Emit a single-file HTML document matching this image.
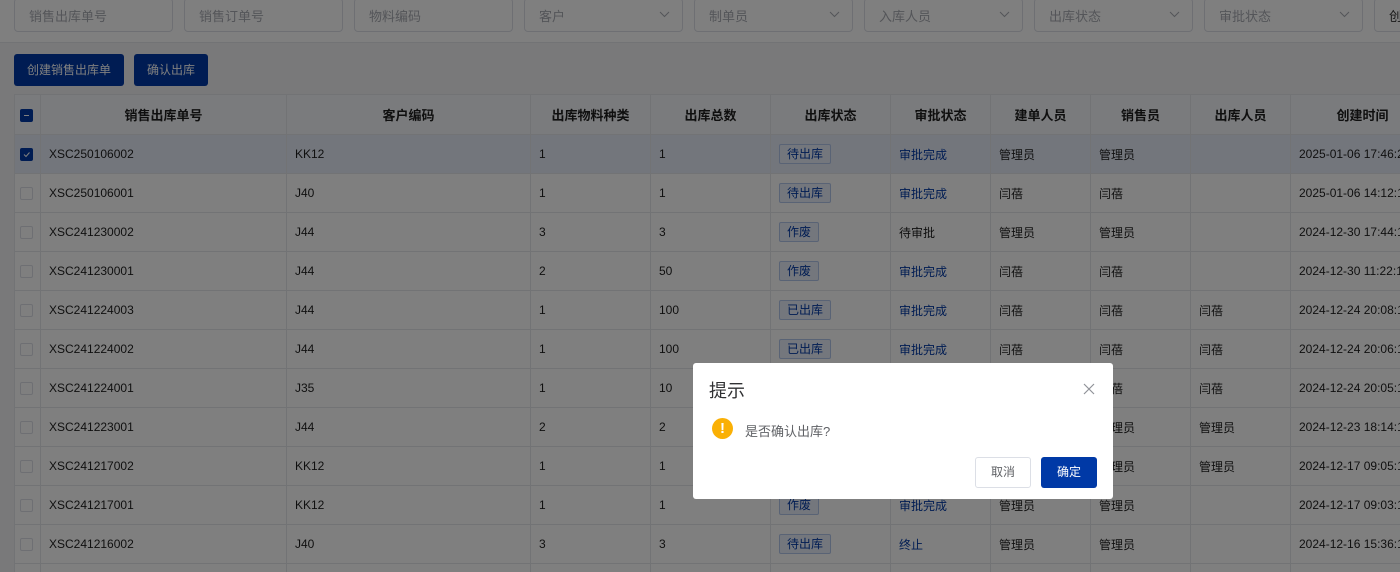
<!DOCTYPE html>
<html><head><meta charset="utf-8"><style>
*{box-sizing:border-box;margin:0;padding:0}
html,body{width:1400px;height:572px;overflow:hidden}
body{background:#f2f3f5;font-family:"Liberation Sans","Noto Sans CJK SC",sans-serif;font-size:12px;color:#1f1f1f;position:relative}
.top{position:absolute;left:0;top:0;width:1400px;height:43px;background:#fff;border-bottom:1px solid #e4e6ea}
.inp{position:absolute;top:-2px;height:34px;width:159px;border:1px solid #dcdfe6;border-radius:4px;background:#fff;color:#a8abb2;font-size:13px;padding:7px 14px}
.inp svg{position:absolute;right:12px;top:12px}
.btn{position:absolute;top:54px;height:32px;background:#0039a6;color:#fff;border-radius:3px;font-size:12px;line-height:32px;text-align:center}
table{position:absolute;left:14px;top:94px;border-collapse:collapse;table-layout:fixed;width:1420px;background:#fff}
td,th{border:1px solid #e4e6ea;height:39px;padding:0 8px;white-space:nowrap;overflow:hidden;text-align:left;font-weight:normal}
th{height:40px;background:#f5f7fa;text-align:center;font-weight:bold;font-size:13px}
tr.sel td{background:#e6ecf8}
.cb{display:inline-block;width:13px;height:13px;border:1px solid #dcdfe6;border-radius:2px;background:#fff;vertical-align:middle;position:relative}
.cb.on{background:#0039a6;border-color:#0039a6}
.tag{display:inline-block;border:1px solid #b3c6eb;background:#e8eefa;color:#0039a6;border-radius:2px;padding:0 7px;line-height:18px;font-size:12px}
.lk{color:#0039a6}
.ov{position:absolute;left:0;top:0;width:1400px;height:572px;background:rgba(0,0,0,.5)}
.dlg{position:absolute;left:693px;top:363px;width:420px;height:136px;background:#fff;border-radius:3px}
</style></head><body>
<div class="top">
<div class="inp" style="left:14px">销售出库单号</div>
<div class="inp" style="left:184px">销售订单号</div>
<div class="inp" style="left:354px">物料编码</div>
<div class="inp" style="left:524px">客户<svg width="11" height="7"><path d="M1 1l4.5 4.5L10 1" stroke="#a8abb2" fill="none"/></svg></div>
<div class="inp" style="left:694px">制单员<svg width="11" height="7"><path d="M1 1l4.5 4.5L10 1" stroke="#a8abb2" fill="none"/></svg></div>
<div class="inp" style="left:864px">入库人员<svg width="11" height="7"><path d="M1 1l4.5 4.5L10 1" stroke="#a8abb2" fill="none"/></svg></div>
<div class="inp" style="left:1034px">出库状态<svg width="11" height="7"><path d="M1 1l4.5 4.5L10 1" stroke="#a8abb2" fill="none"/></svg></div>
<div class="inp" style="left:1204px">审批状态<svg width="11" height="7"><path d="M1 1l4.5 4.5L10 1" stroke="#a8abb2" fill="none"/></svg></div>
<div class="inp" style="left:1374px;color:#333">创</div>
</div>
<div class="btn" style="left:14px;width:110px">创建销售出库单</div>
<div class="btn" style="left:134px;width:74px">确认出库</div>
<table>
<colgroup><col style="width:26px"><col style="width:246px"><col style="width:244px"><col style="width:120px"><col style="width:120px"><col style="width:120px"><col style="width:100px"><col style="width:100px"><col style="width:100px"><col style="width:100px"><col style="width:144px"></colgroup>
<tr><th style="padding:0 0 0 5px;text-align:left"><span class="cb on"><span style="position:absolute;left:3px;top:5px;width:5px;height:1px;background:#fff"></span></span></th><th>销售出库单号</th><th>客户编码</th><th>出库物料种类</th><th>出库总数</th><th>出库状态</th><th>审批状态</th><th>建单人员</th><th>销售员</th><th>出库人员</th><th>创建时间</th></tr>
<tr class="sel"><td style="padding:0 0 0 5px"><span class="cb on"><svg width="11" height="11" style="position:absolute;left:0;top:0"><path d="M3 5.5l2 2 3.5-4" stroke="#fff" fill="none"/></svg></span></td><td>XSC250106002</td><td>KK12</td><td>1</td><td>1</td><td><span class="tag">待出库</span></td><td class="lk">审批完成</td><td>管理员</td><td>管理员</td><td></td><td>2025-01-06 17:46:23</td></tr>
<tr><td style="padding:0 0 0 5px"><span class="cb"></span></td><td>XSC250106001</td><td>J40</td><td>1</td><td>1</td><td><span class="tag">待出库</span></td><td class="lk">审批完成</td><td>闫蓓</td><td>闫蓓</td><td></td><td>2025-01-06 14:12:11</td></tr>
<tr><td style="padding:0 0 0 5px"><span class="cb"></span></td><td>XSC241230002</td><td>J44</td><td>3</td><td>3</td><td><span class="tag">作废</span></td><td>待审批</td><td>管理员</td><td>管理员</td><td></td><td>2024-12-30 17:44:10</td></tr>
<tr><td style="padding:0 0 0 5px"><span class="cb"></span></td><td>XSC241230001</td><td>J44</td><td>2</td><td>50</td><td><span class="tag">作废</span></td><td class="lk">审批完成</td><td>闫蓓</td><td>闫蓓</td><td></td><td>2024-12-30 11:22:10</td></tr>
<tr><td style="padding:0 0 0 5px"><span class="cb"></span></td><td>XSC241224003</td><td>J44</td><td>1</td><td>100</td><td><span class="tag">已出库</span></td><td class="lk">审批完成</td><td>闫蓓</td><td>闫蓓</td><td>闫蓓</td><td>2024-12-24 20:08:10</td></tr>
<tr><td style="padding:0 0 0 5px"><span class="cb"></span></td><td>XSC241224002</td><td>J44</td><td>1</td><td>100</td><td><span class="tag">已出库</span></td><td class="lk">审批完成</td><td>闫蓓</td><td>闫蓓</td><td>闫蓓</td><td>2024-12-24 20:06:10</td></tr>
<tr><td style="padding:0 0 0 5px"><span class="cb"></span></td><td>XSC241224001</td><td>J35</td><td>1</td><td>10</td><td><span class="tag">已出库</span></td><td class="lk">审批完成</td><td>闫蓓</td><td>闫蓓</td><td>闫蓓</td><td>2024-12-24 20:05:10</td></tr>
<tr><td style="padding:0 0 0 5px"><span class="cb"></span></td><td>XSC241223001</td><td>J44</td><td>2</td><td>2</td><td><span class="tag">已出库</span></td><td class="lk">审批完成</td><td>管理员</td><td>管理员</td><td>管理员</td><td>2024-12-23 18:14:10</td></tr>
<tr><td style="padding:0 0 0 5px"><span class="cb"></span></td><td>XSC241217002</td><td>KK12</td><td>1</td><td>1</td><td><span class="tag">已出库</span></td><td class="lk">审批完成</td><td>管理员</td><td>管理员</td><td>管理员</td><td>2024-12-17 09:05:10</td></tr>
<tr><td style="padding:0 0 0 5px"><span class="cb"></span></td><td>XSC241217001</td><td>KK12</td><td>1</td><td>1</td><td><span class="tag">作废</span></td><td class="lk">审批完成</td><td>管理员</td><td>管理员</td><td></td><td>2024-12-17 09:03:10</td></tr>
<tr><td style="padding:0 0 0 5px"><span class="cb"></span></td><td>XSC241216002</td><td>J40</td><td>3</td><td>3</td><td><span class="tag">待出库</span></td><td class="lk">终止</td><td>管理员</td><td>管理员</td><td></td><td>2024-12-16 15:36:10</td></tr>
<tr><td></td><td></td><td></td><td></td><td></td><td></td><td></td><td></td><td></td><td></td><td></td></tr>
</table>
<div class="ov"></div>
<div class="dlg">
<div style="position:absolute;left:16px;top:14px;font-size:18px;color:#303133">提示</div>
<svg style="position:absolute;left:390px;top:20px" width="12" height="12"><path d="M1 1l10 10M11 1L1 11" stroke="#909399" stroke-width="1.2"/></svg>
<div style="position:absolute;left:19px;top:55px;width:21px;height:21px;border-radius:50%;background:#fab005;color:#fff;font-weight:bold;font-size:15px;text-align:center;line-height:21px">!</div>
<div style="position:absolute;left:52px;top:58px;font-size:13px;color:#606266">是否确认出库?</div>
<div style="position:absolute;left:282px;top:94px;width:56px;height:31px;border:1px solid #dcdfe6;border-radius:3px;text-align:center;line-height:29px;color:#606266">取消</div>
<div style="position:absolute;left:348px;top:94px;width:56px;height:31px;background:#0039a6;border-radius:3px;text-align:center;line-height:31px;color:#fff">确定</div>
</div>
</body></html>
